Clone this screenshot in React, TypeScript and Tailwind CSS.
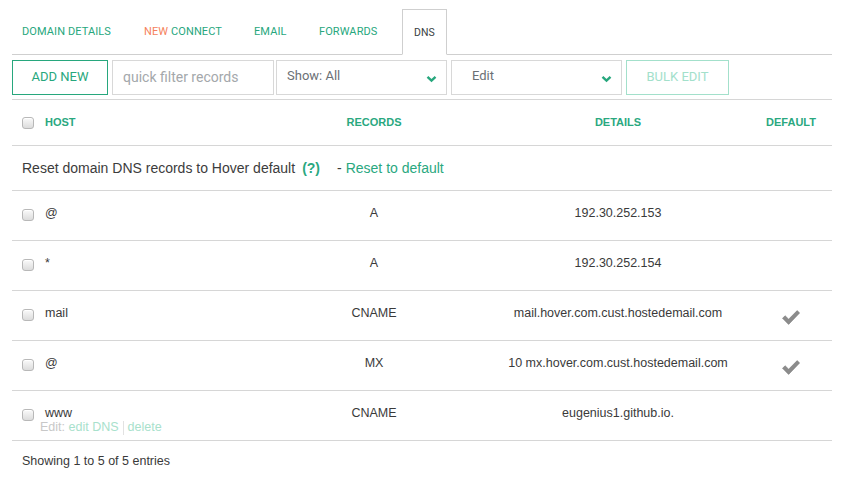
import React from 'react'

const teal = 'text-[#27a77d]'

type Row = {
  host: string
  type: string
  details: string
  isDefault?: boolean
  showEdit?: boolean
}

const rows: Row[] = [
  { host: '@', type: 'A', details: '192.30.252.153' },
  { host: '*', type: 'A', details: '192.30.252.154' },
  { host: 'mail', type: 'CNAME', details: 'mail.hover.com.cust.hostedemail.com', isDefault: true },
  { host: '@', type: 'MX', details: '10 mx.hover.com.cust.hostedemail.com', isDefault: true },
  { host: 'www', type: 'CNAME', details: 'eugenius1.github.io.', showEdit: true },
]

function Box() {
  return (
    <span className="inline-block w-[12px] h-[12px] rounded-[3px] border border-[#b8b8b8] bg-gradient-to-b from-[#fafafa] to-[#dcdcdc] shadow-[inset_0_1px_0_#fff]" />
  )
}

function Chevron() {
  return (
    <svg width="11" height="8" viewBox="0 0 11 8" className="text-[#27a77d]">
      <path d="M1.5 1.8 L5.5 5.6 L9.5 1.8" fill="none" stroke="currentColor" strokeWidth="2.4" />
    </svg>
  )
}

function Check() {
  return (
    <svg width="20" height="17" viewBox="0 0 20 17">
      <path
        d="M1.5 9.2 L4.2 6.8 L7.6 10.2 L16.2 1.6 L18.6 4 L7.6 15.4 Z"
        fill="#8c8c8c"
        stroke="#7a7a7a"
        strokeWidth="0.6"
        strokeLinejoin="round"
      />
    </svg>
  )
}

export default function App() {
  const din = { fontFamily: 'Roboto, "Liberation Sans", sans-serif' }
  return (
    <div className="w-[857px] h-[484px] bg-white px-[12px] pt-[9px] text-[#333]" style={{ fontFamily: '"Liberation Sans", Arial, sans-serif' }}>
      {/* Tabs */}
      <div className="flex items-end border-b border-[#cfcfcf] h-[46px] w-[820px] text-[11px] tracking-[0.1px]" style={din}>
        <div className={`w-[132px] pl-[10px] pb-[14px] ${teal}`}>DOMAIN DETAILS</div>
        <div className={`w-[110px] pb-[14px] ${teal}`}>
          <span className="text-[#f5825c]">NEW</span> CONNECT
        </div>
        <div className={`w-[65px] pb-[14px] ${teal}`}>EMAIL</div>
        <div className={`w-[83px] pb-[14px] ${teal}`}>FORWARDS</div>
        <div className="h-[46px] -mb-px w-[45px] border border-b-white border-[#cfcfcf] bg-white flex items-center justify-center pt-[2px] text-[10.5px] text-[#3a3f44]">
          DNS
        </div>
      </div>

      {/* Toolbar */}
      <div className="flex items-center gap-[4px] h-[45px] border-b border-[#d6d6d6] w-[820px]" style={din}>
        <button className={`w-[96px] h-[35px] border border-[#27a77d] text-[13px] ${teal}`}>ADD NEW</button>
        <div className="w-[162px] h-[35px] border border-[#d8d8d8] flex items-center pl-[10px] text-[14px] text-[#a4a8ab]">
          quick filter records
        </div>
        <div className="w-[171px] h-[35px] -ml-[2px] border border-[#d8d8d8] flex items-center justify-between pl-[10px] pr-[9px] text-[13px] text-[#6b7075]">
          <span className="-mt-[2px]">Show: All</span>
          <span className="mt-[4px]"><Chevron /></span>
        </div>
        <div className="w-[171px] h-[35px] border border-[#d8d8d8] flex items-center justify-between pl-[20px] pr-[9px] text-[13px] text-[#6b7075]">
          <span className="-mt-[2px]">Edit</span>
          <span className="mt-[4px]"><Chevron /></span>
        </div>
        <button className="w-[103px] h-[35px] border border-[#a3e0cb] text-[13px] text-[#a3e0cb]">BULK EDIT</button>
      </div>

      {/* Table */}
      <div className="w-[820px] text-[12.5px]">
        <div className="flex items-center h-[46px] border-b border-[#d6d6d6] text-[11px] font-bold text-[#2aa87f]">
          <div className="w-[300px] flex items-center pl-[10px] gap-[11px]">
            <Box />
            <span>HOST</span>
          </div>
          <div className="w-[124px] text-center">RECORDS</div>
          <div className="w-[314px] pl-[50px] text-center">DETAILS</div>
          <div className="w-[82px] text-center">DEFAULT</div>
        </div>

        <div className="h-[45px] flex items-center pl-[10px] border-b border-[#d6d6d6] text-[14px] text-[#3c3c3c]">
          Reset domain DNS records to Hover default
          <span className="font-bold text-[#2aa87f] ml-[7px]">(?)</span>
          <span className="ml-[17px]">-</span>
          <span className="ml-[4px] text-[#2aa87f]">Reset to default</span>
        </div>

        {rows.map((r, i) => (
          <div key={i} className="h-[50px] flex border-b border-[#d6d6d6] text-[#3a3a3a]">
            <div className="w-[300px] pl-[10px] pt-[15px]">
              <div className="flex items-center gap-[11px]">
                <span className="mt-[3px] flex"><Box /></span>
                <span className="leading-[15px]">{r.host}</span>
              </div>
              {r.showEdit && (
                <div className="pl-[18px] -mt-[1px] text-[#c8c8c8] leading-[15px]">
                  Edit: <span className="text-[#a8e1cc]">edit DNS</span>
                  <span className="inline-block w-px h-[14px] bg-[#e2e2e2] align-middle mx-[4px]" />
                  <span className="text-[#a8e1cc]">delete</span>
                </div>
              )}
            </div>
            <div className="w-[124px] text-center pt-[15px] leading-[15px]">{r.type}</div>
            <div className="w-[314px] pl-[50px] text-center pt-[15px] leading-[15px]">{r.details}</div>
            <div className="w-[82px] flex justify-center pt-[18px]">
              {r.isDefault && <Check />}
            </div>
          </div>
        ))}

        <div className="pl-[10px] pt-[11px] text-[12.5px] text-[#3a3a3a]">Showing 1 to 5 of 5 entries</div>
      </div>
    </div>
  )
}
